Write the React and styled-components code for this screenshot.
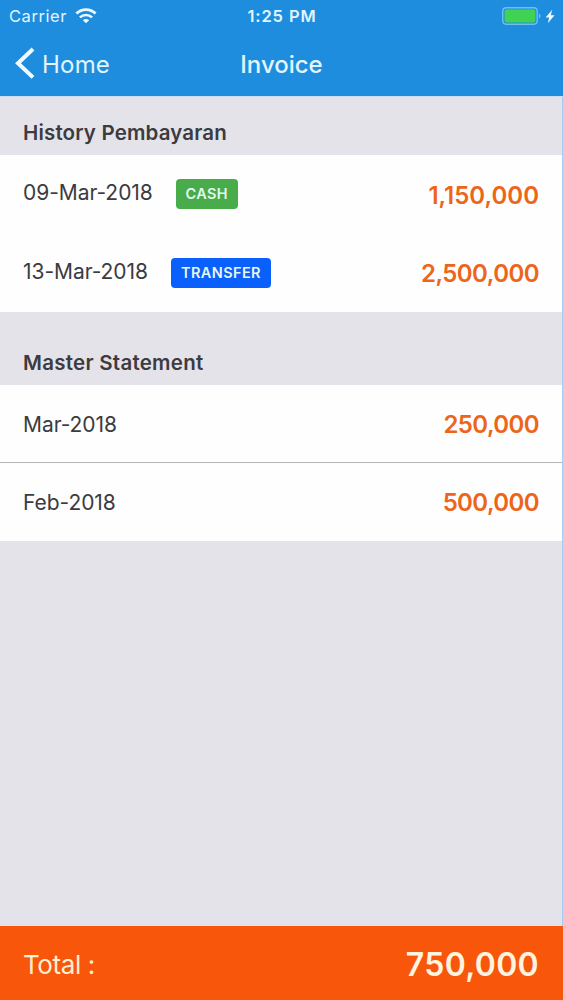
import React from "react";
import styled, { createGlobalStyle } from "styled-components";

const GlobalStyle = createGlobalStyle`
  * {
    box-sizing: border-box;
  }
  body {
    margin: 0;
    font-family: Inter, "Liberation Sans", sans-serif;
    color: #3c3b40;
    background-color: #e4e3e9;
  }
`;

const Screen = styled.div`
  width: 563px;
  height: 1000px;
  overflow: hidden;
  display: flex;
  flex-direction: column;
  background-color: #e4e3e9;
`;

const Header = styled.header`
  height: 97px;
  color: #e2f5ff;
  background-color: #1e8dde;
  border-bottom: 1px solid #cfdff2;
`;

const StatusBar = styled.div`
  height: 32px;
  padding: 0 8px 0 9px;
  display: grid;
  grid-template-columns: 1fr auto 1fr;
  align-items: center;
  font-size: 16.5px;
  white-space: nowrap;
`;

const Carrier = styled.div`
  display: flex;
  align-items: center;
  gap: 8px;
  letter-spacing: 0.55px;
`;

const Clock = styled.div`
  font-weight: 600;
  letter-spacing: 0.9px;
`;

const Power = styled.div`
  display: flex;
  align-items: center;
  justify-content: flex-end;
  gap: 3px;
`;

const NavBar = styled.div`
  height: 64px;
  padding: 0 14px;
  display: grid;
  grid-template-columns: 1fr auto 1fr;
  align-items: center;
  font-size: 24px;
`;

const Back = styled.div`
  display: flex;
  align-items: center;
  gap: 6px;
  letter-spacing: 0.2px;
`;

const Title = styled.div`
  font-weight: 500;
  letter-spacing: 0;
`;

const Content = styled.main`
  flex: 1;
  border-right: 1px solid #a3cdf0;
`;

const SectionTitle = styled.h2`
  height: ${({ $height }) => $height}px;
  margin: 0;
  padding: 0 23px 9px;
  display: flex;
  align-items: flex-end;
  font-size: 20.5px;
  line-height: 26px;
  font-weight: 600;
  letter-spacing: ${({ $spacing }) => $spacing}px;
`;

const List = styled.div`
  background-color: #fefefe;
`;

const Row = styled.div`
  height: ${({ $height }) => $height}px;
  padding: 0 23px;
  display: flex;
  align-items: center;
  border-bottom: ${({ $divider }) => ($divider ? "1px solid #b4b4b6" : "0")};
`;

const DateText = styled.span`
  font-size: 21px;
  line-height: 26px;
  letter-spacing: -0.05px;
  padding-top: ${({ $drop }) => $drop || 0}px;
  padding-bottom: ${({ $raise }) => $raise || 0}px;
`;

const Badge = styled.span`
  width: ${({ $width }) => $width}px;
  height: 30px;
  margin-left: 23px;
  padding-bottom: 1px;
  display: flex;
  align-items: center;
  justify-content: center;
  border-radius: 4px;
  font-size: 14.5px;
  font-weight: 600;
  letter-spacing: 0.4px;
  color: #e6f6f0;
  background-color: ${({ $color }) => $color};
`;

const Amount = styled.span`
  margin-left: auto;
  padding-top: ${({ $drop }) => $drop}px;
  font-size: 24px;
  line-height: 30px;
  font-weight: 600;
  letter-spacing: ${({ $spacing }) => $spacing}px;
  color: #ed6519;
`;

const Footer = styled.footer`
  height: 74px;
  padding: 2px 24px 0 23px;
  display: flex;
  align-items: center;
  justify-content: space-between;
  color: #ffefd2;
  background-color: #f8560a;
`;

const TotalLabel = styled.span`
  font-size: 26px;
  letter-spacing: -0.4px;
`;

const TotalAmount = styled.span`
  font-size: 32px;
  font-weight: 600;
  letter-spacing: 0.3px;
  color: #fff4e0;
`;

const payments = [
  { date: "09-Mar-2018", method: "CASH", color: "#47ac49", width: 62, amount: "1,150,000", spacing: 0, raise: 3, drop: 3 },
  { date: "13-Mar-2018", method: "TRANSFER", color: "#0a60fc", width: 100, amount: "2,500,000", spacing: -0.55, raise: 2, drop: 2 },
];

const statements = [
  { month: "Mar-2018", amount: "250,000" },
  { month: "Feb-2018", amount: "500,000" },
];

const WifiIcon = () => (
  <svg width="22" height="16" viewBox="0 0 22 16" fill="none" stroke="#e9f8ff">
    <path d="M1.4 5.6C6.8 0.2 15.2 0.2 20.6 5.6" strokeWidth="2.8" />
    <path d="M4.9 9.4C8.4 6.1 13.6 6.1 17.1 9.4" strokeWidth="2.6" />
    <path d="M11 15.2L7.8 12.2C9.6 10.5 12.4 10.5 14.2 12.2Z" fill="#e9f8ff" stroke="none" />
  </svg>
);

const BatteryIcon = () => (
  <svg width="40" height="18" viewBox="0 0 40 18">
    <rect x="0.8" y="0.8" width="34.4" height="16.4" rx="3.4" fill="none" stroke="#70bff0" strokeWidth="1.4" />
    <rect x="2.6" y="2.6" width="30.8" height="12.8" rx="1.8" fill="#40d353" />
    <path d="M37 6.5C39 7.3 39 10.7 37 11.5Z" fill="#70bff0" />
  </svg>
);

const BoltIcon = () => (
  <svg width="10" height="15" viewBox="0 0 10 15" fill="#f2faff">
    <path d="M7.2 0.8L0.6 8.5H4.2L2.8 14.2L9.6 6.2H5.8Z" />
  </svg>
);

const BackIcon = () => (
  <svg width="22" height="34" viewBox="0 0 22 34" fill="none" stroke="#f0faff" strokeWidth="4">
    <path d="M19 2L4 16.2L19 30.4" />
  </svg>
);

const App = () => {
  return (
    <>
      <GlobalStyle />
      <Screen>
        <Header>
          <StatusBar>
            <Carrier>
              Carrier <WifiIcon />
            </Carrier>
            <Clock>1:25 PM</Clock>
            <Power>
              <BatteryIcon />
              <BoltIcon />
            </Power>
          </StatusBar>
          <NavBar>
            <Back>
              <BackIcon /> Home
            </Back>
            <Title>Invoice</Title>
          </NavBar>
        </Header>
        <Content>
          <SectionTitle $height={58} $spacing={0.16}>History Pembayaran</SectionTitle>
          <List>
            {payments.map(({ date, method, color, width, amount, spacing, raise, drop }) => (
              <Row key={date} $height={78.5}>
                <DateText $raise={raise}>{date}</DateText>
                <Badge $width={width} $color={color}>
                  {method}
                </Badge>
                <Amount $drop={drop} $spacing={spacing}>{amount}</Amount>
              </Row>
            ))}
          </List>
          <SectionTitle $height={73} $spacing={0.26}>Master Statement</SectionTitle>
          <List>
            {statements.map(({ month, amount }, i) => (
              <Row key={month} $height={78} $divider={i < statements.length - 1}>
                <DateText $drop={2}>{month}</DateText>
                <Amount $drop={2} $spacing={-0.6}>{amount}</Amount>
              </Row>
            ))}
          </List>
        </Content>
        <Footer>
          <TotalLabel>Total :</TotalLabel>
          <TotalAmount>750,000</TotalAmount>
        </Footer>
      </Screen>
    </>
  );
};

export default App;
